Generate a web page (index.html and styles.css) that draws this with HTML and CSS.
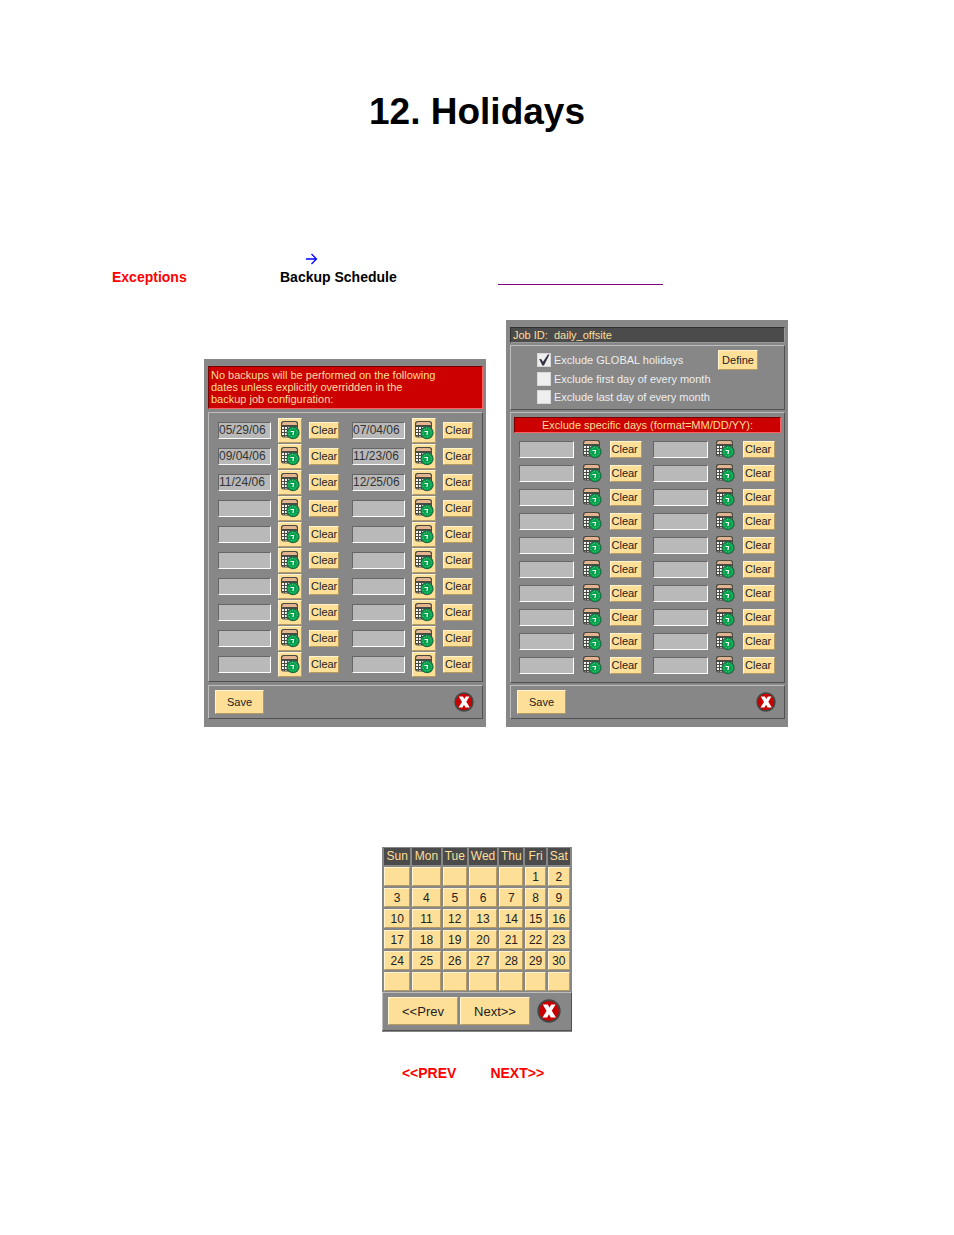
FILE: index.html
```html
<!DOCTYPE html>
<html lang="en">
<head>
    <meta charset="utf-8">
    <title>12. Holidays</title>
    <link rel="stylesheet" href="styles.css">
</head>
<body>
    <svg class="symbols" aria-hidden="true">
        <symbol id="icon-date" viewBox="0 0 20 20">
            <rect x="1" y="1" width="17" height="16.500" rx="2.500" fill="#4a4a45"/>
            <path d="M3.500 2h12l1.500 1.500V5H2V3.500z" fill="#e4b48e"/>
            <path d="M2 7h15v8.500l-1 1H3.500L2 15z" fill="#f4f4f4"/>
            <path d="M2 9.500h15M2 12.500h15M2 15.500h15M4.500 7v10M7.500 7v10M10.500 7v10M13.500 7v10" stroke="#4a4a45" stroke-width="1"/>
            <circle cx="13" cy="12.700" r="6.600" fill="#2f5a42"/>
            <circle cx="13" cy="12.700" r="5.700" fill="#00a04a"/>
            <circle cx="13" cy="12.700" r="4.200" fill="none" stroke="#7fd6a2" stroke-width="1" stroke-dasharray="1 1.600"/>
            <path d="M10.500 11.500h3l-.5 3.500" fill="none" stroke="#fff" stroke-width="1.200"/>
        </symbol>
        <symbol id="icon-close" viewBox="0 0 20 20">
            <circle cx="10" cy="10" r="9" fill="#c80000" stroke="#404848" stroke-width="1.500"/>
            <path d="M4.800 4.500h4.200l1.300 2.600 1.500-2.600h3.700l-3.200 5.300 3.500 5.700h-4.300L10 12.700l-1.500 2.800H4.500l3.500-5.600z" fill="#fff"/>
        </symbol>
    </svg>

    <h1>12. Holidays</h1>

    <div class="intro">
        <svg class="arrow" viewBox="0 0 12 12"><path d="M0 6h10M5.500 1L10.500 6 5.500 11" fill="none" stroke="#00f" stroke-width="1.300"/></svg>
        <b class="red">Exceptions</b>
        <b>Backup Schedule</b>
        <a class="blank-link" href="#job" aria-label="Backup Schedule"></a>
    </div>

    <div class="panels">
        <form class="panel global">
            <div class="notice">No backups will be performed on the following<br>dates unless explicitly overridden in the<br>backup job configuration:</div>
            <div class="frame">
                <div class="entries" data-dates="05/29/06,07/04/06,09/04/06,11/23/06,11/24/06,12/25/06"></div>
            </div>
            <div class="frame footer">
                <button type="button" class="btn save">Save</button>
                <button type="button" class="close" aria-label="Close"><svg><use href="#icon-close"/></svg></button>
            </div>
        </form>

        <form class="panel job" id="job">
            <div class="job-title">Job ID:&nbsp; daily_offsite</div>
            <div class="frame options">
                <div class="checks">
                    <label><input type="checkbox" checked>Exclude GLOBAL holidays</label>
                    <label><input type="checkbox">Exclude first day of every month</label>
                    <label><input type="checkbox">Exclude last day of every month</label>
                </div>
                <button type="button" class="btn define">Define</button>
            </div>
            <div class="frame">
                <div class="notice">Exclude specific days (format=MM/DD/YY):</div>
                <div class="entries" data-dates=""></div>
            </div>
            <div class="frame footer">
                <button type="button" class="btn save">Save</button>
                <button type="button" class="close" aria-label="Close"><svg><use href="#icon-close"/></svg></button>
            </div>
        </form>
    </div>

    <div class="calendar">
        <table>
            <colgroup>
                <col class="w26"><col class="w28"><col class="w24"><col class="w28"><col class="w24"><col class="w20"><col class="w22">
            </colgroup>
            <thead>
                <tr><th>Sun</th><th>Mon</th><th>Tue</th><th>Wed</th><th>Thu</th><th>Fri</th><th>Sat</th></tr>
            </thead>
            <tbody></tbody>
        </table>
        <div class="frame footer">
            <button type="button" class="btn">&lt;&lt;Prev</button>
            <button type="button" class="btn">Next&gt;&gt;</button>
            <button type="button" class="close" aria-label="Close"><svg><use href="#icon-close"/></svg></button>
        </div>
    </div>

    <div class="caption">
        <b>&lt;&lt;PREV</b>
        <b>NEXT&gt;&gt;</b>
    </div>

    <script src="script.js"></script>
</body>
</html>
```
FILE: styles.css
```css
body {
    margin: 0;
    padding: 90px 0;
    background-color: white;
    color: black;
    font-family: "Liberation Sans", Arial, sans-serif;
    font-size: 14px;
    line-height: 18px;
}

button, input {
    font-family: inherit;
    margin: 0;
    box-sizing: border-box;
}

.symbols {
    display: none;
}

h1 {
    margin: 0;
    font-size: 37px;
    line-height: 44px;
    text-align: center;
}

.intro {
    display: grid;
    grid-template-columns: 168px 218px 165px;
    grid-template-rows: 18px 18px;
    margin-top: 116px;
    padding-left: 112px;
}

.arrow {
    grid-column: 1 / -1;
    width: 12px;
    height: 12px;
    margin: 3px 0 0 194px;
}

.red {
    color: red;
}

.blank-link {
    height: 16px;
    border-bottom: 1px solid purple;
}

/* Holiday panels */
.panels {
    display: flex;
    justify-content: center;
    align-items: flex-end;
    gap: 20px;
    margin-top: 34px;
    padding-left: 38px;
}

.panel {
    width: 282px;
    padding: 7px 3px 8px 4px;
    box-sizing: border-box;
    background-color: #878787;
    font-size: 11px;
    line-height: 12px;
    display: flex;
    flex-direction: column;
    gap: 3px;
}

.frame {
    border: 1px solid;
    border-color: #bdbdbd #505050 #505050 #bdbdbd;
}

.notice {
    background-color: #c00;
    color: #fddf98;
    border: 1px solid;
    border-color: #700 #ff6060 #ff6060 #700;
    padding: 2px;
}

.global .notice {
    padding-bottom: 3px;
}

.entries {
    display: grid;
    grid-template-columns: 1fr 1fr;
    column-gap: 13px;
    padding: 4px 9px;
}

.entry {
    display: flex;
    align-items: center;
    justify-content: space-between;
    height: 26px;
}

.entry input {
    width: 53px;
    height: 17px;
    padding: 0;
    border: 1px solid;
    border-color: #666 #fff #fff #666;
    background-color: #b9b9b9;
    color: #333;
    font-size: 12px;
}

.btn, .clear, .day {
    background-color: #fddf98;
    border: 1px solid;
    border-color: #fff4cf #b59a62 #b59a62 #fff4cf;
    color: #222;
    padding: 0;
}

.date {
    display: flex;
    justify-content: center;
    align-items: center;
    width: 24px;
    height: 25px;
    padding: 0;
    background-color: #fddf98;
    border: 1px solid;
    border-color: #fff4cf #b59a62 #b59a62 #fff4cf;
}

.date svg {
    width: 20px;
    height: 20px;
    flex: none;
}

.clear {
    width: 30px;
    height: 17px;
    padding-left: 1px;
    overflow: hidden;
    font-size: 11px;
    line-height: 14px;
    text-align: left;
}

.footer {
    display: flex;
    justify-content: space-between;
    align-items: center;
    padding: 4px 8px 4px 6px;
}

.save {
    width: 49px;
    height: 24px;
    font-size: 11px;
}

.close {
    display: flex;
    padding: 0;
    border: none;
    background: none;
}

.close svg {
    width: 20px;
    height: 20px;
}

.job {
    gap: 2px;
}

.job-title {
    background-color: #4b4b4b;
    color: #fddf98;
    border: 1px solid;
    border-color: #303030 #999 #999 #303030;
    padding: 1px 2px;
}

.options {
    display: flex;
    justify-content: space-between;
    align-items: flex-start;
    padding: 4px 26px 5px 26px;
    color: #eee;
}

.checks {
    display: flex;
    flex-direction: column;
    gap: 4px;
    padding-top: 3px;
}

.checks label {
    display: flex;
    align-items: center;
    gap: 3px;
}

.checks input {
    appearance: none;
    width: 14px;
    height: 14px;
    border: 1px solid #d8d8d8;
    background-color: #eee;
}

.checks label:first-child {
    margin-bottom: 1px;
}

.checks input:checked::before {
    content: "";
    display: block;
    width: 12px;
    height: 12px;
    background-color: #343444;
    clip-path: polygon(10% 42%, 26% 42%, 42% 65%, 82% 5%, 96% 5%, 50% 95%, 36% 95%);
}

.define {
    width: 40px;
    height: 20px;
    font-size: 11px;
}

.job .notice {
    margin: 4px 3px 0 3px;
    padding: 1px;
    text-align: center;
}

.job .entries {
    column-gap: 11px;
    padding: 4px 9px 5px 8px;
}

.job .entry {
    height: 24px;
}

.job .entry input {
    width: 55px;
}

.job .entry .date {
    width: 20px;
    height: 20px;
    border: none;
    background: none;
}

.job .clear {
    width: 32px;
}

/* Calendar popup */
.calendar {
    display: flow-root;
    width: 190px;
    margin: 120px auto 0;
    padding-bottom: 1px;
    box-sizing: border-box;
    background-color: #878787;
}

.calendar table {
    width: 100%;
    margin: -1px 0;
    table-layout: fixed;
    border-collapse: separate;
    border-spacing: 2px;
    font-size: 12px;
}

.calendar th, .calendar td {
    padding: 0;
}

.calendar th {
    height: 17px;
    background-color: #4b4b4b;
    color: #fddf98;
    font-weight: normal;
    line-height: 17px;
}

.day {
    display: block;
    width: 100%;
    height: 19px;
    font-size: 12px;
}

.w20 { width: 20px; }
.w22 { width: 22px; }
.w24 { width: 24px; }
.w26 { width: 26px; }
.w28 { width: 28px; }

.calendar .footer {
    gap: 2px;
    padding: 4px 10px 5px 5px;
}

.calendar .btn {
    width: 70px;
    height: 28px;
    font-size: 13px;
}

.calendar .close {
    margin-left: auto;
}

.calendar .close svg {
    width: 24px;
    height: 24px;
}

.caption {
    display: flex;
    justify-content: center;
    gap: 34px;
    margin-top: 32px;
    padding-right: 8px;
    color: red;
}
```
FILE: script.js
```js
// Date entries: ten rows of two in each panel
document.querySelectorAll('.entries').forEach(function(list) {
    var dates = list.dataset.dates.split(',');
    for (var i = 0; i < 20; i++) {
        var entry = document.createElement('div');
        entry.className = 'entry';
        entry.innerHTML =
            '<input type="text" aria-label="Date ' + (i + 1) + '" value="' + (dates[i] || '') + '">' +
            '<button type="button" class="date" aria-label="Pick date"><svg><use href="#icon-date"/></svg></button>' +
            '<button type="button" class="clear">Clear</button>';
        list.appendChild(entry);
        entry.querySelector('.clear').addEventListener('click', function() {
            this.parentNode.querySelector('input').value = '';
        });
    }
});

// Month starts on a Friday and has 30 days
var body = document.querySelector('.calendar tbody');
for (var week = 0; week < 6; week++) {
    var row = body.insertRow();
    for (var d = 0; d < 7; d++) {
        var day = week * 7 + d - 4;
        var inMonth = day > 0 && day < 31;
        row.insertCell().innerHTML = '<button type="button" class="day"' +
            (inMonth ? '>' + day : ' disabled>') + '</button>';
    }
}
```
